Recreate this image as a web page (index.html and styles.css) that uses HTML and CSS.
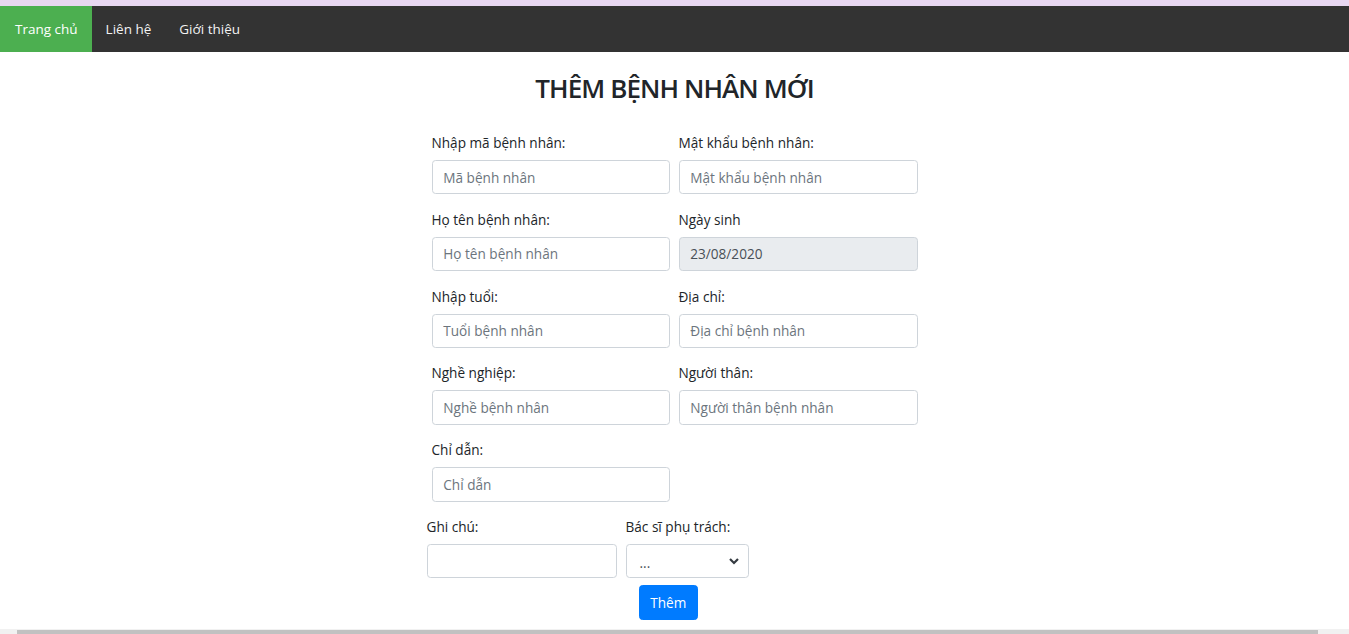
FILE: index.html
```html
<!DOCTYPE html>
<html lang="vi">
<head>
<meta charset="utf-8">
<title>Thêm bệnh nhân mới</title>
<link rel="stylesheet" href="styles.css">
</head>
<body>
<div class="topstrip"></div>
<nav class="topnav">
  <a class="nav-item active" href="#">Trang chủ</a>
  <a class="nav-item" href="#">Liên hệ</a>
  <a class="nav-item" href="#">Giới thiệu</a>
</nav>
<main class="page">
  <h2 class="title">THÊM BỆNH NHÂN MỚI</h2>
  <form class="form">
    <div class="grid">
      <div class="group">
        <label class="label">Nhập mã bệnh nhân:</label>
        <input class="control" type="text" placeholder="Mã bệnh nhân">
      </div>
      <div class="group">
        <label class="label">Mật khẩu bệnh nhân:</label>
        <input class="control" type="text" placeholder="Mật khẩu bệnh nhân">
      </div>
      <div class="group">
        <label class="label">Họ tên bệnh nhân:</label>
        <input class="control" type="text" placeholder="Họ tên bệnh nhân">
      </div>
      <div class="group">
        <label class="label">Ngày sinh</label>
        <input class="control disabled" type="text" value="23/08/2020" disabled>
      </div>
      <div class="group">
        <label class="label">Nhập tuổi:</label>
        <input class="control" type="text" placeholder="Tuổi bệnh nhân">
      </div>
      <div class="group">
        <label class="label">Địa chỉ:</label>
        <input class="control" type="text" placeholder="Địa chỉ bệnh nhân">
      </div>
      <div class="group">
        <label class="label">Nghề nghiệp:</label>
        <input class="control" type="text" placeholder="Nghề bệnh nhân">
      </div>
      <div class="group">
        <label class="label">Người thân:</label>
        <input class="control" type="text" placeholder="Người thân bệnh nhân">
      </div>
      <div class="group">
        <label class="label">Chỉ dẫn:</label>
        <input class="control" type="text" placeholder="Chỉ dẫn">
      </div>
    </div>
    <div class="lastrow">
      <div class="group note">
        <label class="label">Ghi chú:</label>
        <input class="control" type="text">
      </div>
      <div class="group doctor">
        <label class="label">Bác sĩ phụ trách:</label>
        <div class="control select">
          <span>...</span>
          <svg class="chev" width="12" height="12" viewBox="0 0 12 12"><path d="M2 4 L6 8 L10 4" fill="none" stroke="#343a40" stroke-width="2.2"/></svg>
        </div>
      </div>
    </div>
    <div class="btnrow">
      <button class="btn" type="button">Thêm</button>
    </div>
  </form>
</main>
<div class="hscroll"><div class="thumb"></div></div>
</body>
</html>
```
FILE: styles.css
```css
* { box-sizing: border-box; }
html, body { margin: 0; padding: 0; background: #fff; }
body {
  font-family: "Open Sans", "Noto Sans", "Liberation Sans", sans-serif;
  color: #212529;
  font-size: 13.6px;
}
.topstrip { height: 6px; background: #e8d7f1; }
.topnav {
  display: flex;
  height: 46px;
  background: #333;
}
.nav-item {
  display: flex;
  align-items: center;
  padding: 0 14px;
  color: #f2f2f2;
  text-decoration: none;
  font-size: 13.5px;
}
.nav-item:first-child { padding: 0 14px 0 15px; }
.nav-item.active { background: #4caf50; color: #fff; }

.page {
  display: flex;
  flex-direction: column;
  align-items: center;
}
.title {
  margin: 19px 0 0;
  font-size: 26px;
  font-weight: 600;
  line-height: 34px;
  color: #212529;
  letter-spacing: -0.9px;
}
.form {
  width: 496px;
  margin-top: 27px;
}
.grid {
  display: grid;
  grid-template-columns: 238px 239px;
  padding: 0 5px;
  column-gap: 9px;
}
.group {
  display: flex;
  flex-direction: column;
  margin-bottom: 14.4px;
}
.label {
  display: block;
  line-height: 21px;
  margin-bottom: 7px;
}
.control {
  height: 34.4px;
  width: 100%;
  padding: 0 10.8px;
  border: 1px solid #ced4da;
  border-radius: 3.6px;
  font-family: inherit;
  font-size: 13.6px;
  color: #495057;
  background: #fff;
}
.control::placeholder { color: #6c757d; opacity: 1; }
.control.disabled { background: #e9ecef; color: #495057; }
.lastrow {
  display: flex;
  gap: 9px;
}
.lastrow .group { margin-bottom: 0; }
.note { width: 190px; }
.doctor { width: 123px; }
.select {
  display: flex;
  align-items: center;
  justify-content: space-between;
  padding: 0 8px 0 13px;
}
.select span { color: #495057; position: relative; top: 1px; }
.chev { display: block; }
.btnrow {
  display: flex;
  padding-left: 212px;
  margin-top: 7px;
}
.btn {
  height: 34.4px;
  padding: 0 10.8px;
  border: 1px solid #007bff;
  border-radius: 3.6px;
  background: #007bff;
  color: #fff;
  font-family: inherit;
  font-size: 13.6px;
}
.hscroll {
  position: fixed;
  left: 0;
  right: 0;
  bottom: 0;
  height: 5px;
  background: #f1f1f1;
}
.thumb {
  margin: 1px 31px 0 17px;
  height: 4px;
  background: #c1c1c1;
}
```
